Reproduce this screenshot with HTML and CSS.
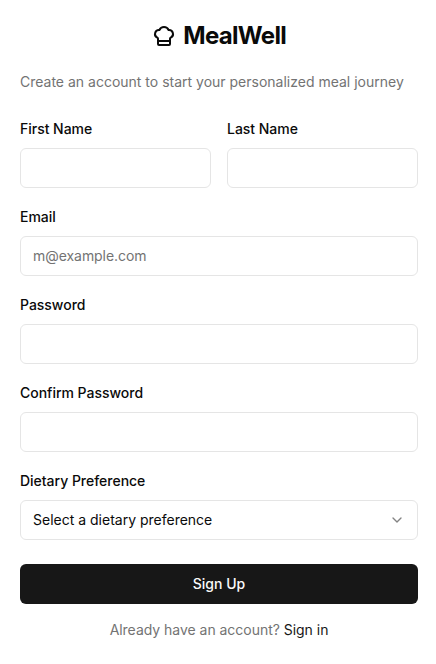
FILE: index.html
```html
<!DOCTYPE html>
<html lang="en">
<head>
<meta charset="utf-8">
<title>MealWell</title>
<link rel="stylesheet" href="styles.css">
</head>
<body>
<main class="card">
  <header class="brand">
    <svg class="brand-icon" viewBox="0 0 24 24" aria-hidden="true"><path d="M17 21a1 1 0 0 0 1-1v-5.35c0-.457.316-.844.727-1.041a4 4 0 0 0-2.134-7.589 5 5 0 0 0-9.186 0 4 4 0 0 0-2.134 7.588c.411.198.727.585.727 1.041V20a1 1 0 0 0 1 1Z"/><path d="M6 17h12"/></svg>
    <h1>MealWell</h1>
  </header>
  <p class="intro">Create an account to start your personalized meal journey</p>
  <form class="form">
    <div class="row">
      <div class="field"><label for="first">First Name</label><input id="first" type="text"></div>
      <div class="field"><label for="last">Last Name</label><input id="last" type="text"></div>
    </div>
    <div class="field"><label for="email">Email</label><input id="email" type="email" placeholder="m@example.com"></div>
    <div class="field"><label for="password">Password</label><input id="password" type="password"></div>
    <div class="field"><label for="confirm">Confirm Password</label><input id="confirm" type="password"></div>
    <div class="field">
      <label for="diet">Dietary Preference</label>
      <button id="diet" class="select" type="button"><span>Select a dietary preference</span>
        <svg class="chevron" viewBox="0 0 24 24" aria-hidden="true"><path d="m6 9 6 6 6-6"/></svg>
      </button>
    </div>
    <button class="submit" type="button">Sign Up</button>
  </form>
  <p class="signin">Already have an account? <a href="#">Sign in</a></p>
</main>
</body>
</html>
```
FILE: styles.css
```css
* { box-sizing: border-box; }
body { margin: 0; background: #fff; color: #0a0a0a; font-family: Inter, sans-serif; font-size: 14px; line-height: 20px; }
.card { padding: 20px 18px 0 20px; }
.brand { display: flex; align-items: center; justify-content: center; gap: 7.4px; height: 32px; }
.brand-icon { width: 24px; height: 24px; fill: none; stroke: currentColor; stroke-width: 2; stroke-linecap: round; stroke-linejoin: round; }
h1 { margin: 0; font-size: 24px; line-height: 32px; font-weight: 700; letter-spacing: -0.7px; }
.intro { margin: 20px 0 0; color: #737373; white-space: nowrap; }
.form { display: grid; gap: 22px; margin-top: 30px; }
.row { display: grid; grid-template-columns: 1fr 1fr; gap: 16px; }
.field { display: grid; gap: 12px; }
label { font-weight: 500; line-height: 14px; letter-spacing: -0.02px; }
input, .select { width: 100%; min-width: 0; height: 40px; padding: 0 12px; border: 1px solid #e5e5e5; border-radius: 6px; background: #fff; font: inherit; color: inherit; }
input { padding-bottom: 1px; }
input::placeholder { color: #737373; opacity: 1; letter-spacing: -0.05px; }
.select { display: flex; align-items: center; justify-content: space-between; }
.chevron { width: 16px; height: 16px; fill: none; stroke: currentColor; stroke-width: 2; stroke-linecap: round; stroke-linejoin: round; opacity: .5; }
.submit { height: 40px; margin-top: 2px; border: 0; border-radius: 6px; background: #171717; color: #fafafa; font: 500 14px/20px Inter, sans-serif; }
.signin { margin: 16px 0 0; text-align: center; color: #737373; letter-spacing: -0.03px; }
.signin a { color: #171717; text-decoration: none; }
```
